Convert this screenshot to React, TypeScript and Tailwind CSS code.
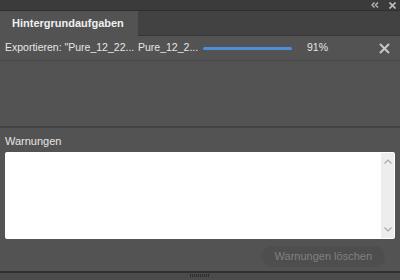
export default function App() {
  return (
    <div className="flex h-[280px] w-[400px] flex-col overflow-hidden bg-[#535353] font-['Liberation_Sans',sans-serif] text-[11px] text-[#e6e6e6]">
      {/* title strip */}
      <div className="flex h-[11px] items-center justify-end gap-[10px] border-b border-[#2e2e2e] bg-[#3b3b3b] pr-[4px]">
        <svg width="8" height="6" viewBox="0 0 8 6" className="text-[#bdbdbd]">
          <path d="M3.5 0.5 1 3l2.5 2.5M7 0.5 4.5 3 7 5.5" fill="none" stroke="currentColor" strokeWidth="1.3" />
        </svg>
        <svg width="7" height="7" viewBox="0 0 7 7" className="text-[#bdbdbd]">
          <path d="M0.5 0.5l6 6M6.5 0.5l-6 6" stroke="currentColor" strokeWidth="1.6" />
        </svg>
      </div>

      {/* tabs */}
      <div className="flex h-[25px] bg-[#424242]">
        <div className="flex w-[138px] items-center bg-[#535353] pl-[12px] font-bold text-[#f0f0f0]">
          Hintergrundaufgaben
        </div>
        <div className="flex-1 border-b border-[#363636]" />
      </div>

      {/* export row */}
      <div className="flex h-[25px] items-center whitespace-nowrap border-b border-[#464646] pl-[5px] pr-[10px] text-[10.5px]">
        <span className="w-[133px]">Exportieren: "Pure_12_22...</span>
        <span className="w-[65px]">Pure_12_2...</span>
        <div className="h-[3px] w-[89px] rounded-full bg-[#4a8fd8]" />
        <span className="ml-[15px]">91%</span>
        <svg width="11" height="11" viewBox="0 0 11 11" className="ml-auto text-[#c8c8c8]">
          <path d="M1 1l9 9M10 1l-9 9" stroke="currentColor" strokeWidth="2" />
        </svg>
      </div>

      <div className="h-[67px] border-b-2 border-[#424242]" />

      {/* warnings */}
      <div className="flex flex-1 flex-col px-[5px] pt-[7px]">
        <div className="leading-[13px]">Warnungen</div>
        <div className="mt-[4px] flex h-[87px] rounded-[2px] bg-white">
          <div className="flex-1" />
          <div className="my-[1px] mr-[1px] flex w-[13px] flex-col items-center justify-between bg-[#ededed] py-[6px]">
            <svg width="8" height="5" viewBox="0 0 8 5" className="text-[#a8a8a8]">
              <path d="M0.5 4.5 4 1l3.5 3.5" fill="none" stroke="currentColor" strokeWidth="1.2" />
            </svg>
            <svg width="8" height="5" viewBox="0 0 8 5" className="text-[#a8a8a8]">
              <path d="M0.5 0.5 4 4l3.5-3.5" fill="none" stroke="currentColor" strokeWidth="1.2" />
            </svg>
          </div>
        </div>
        <div className="mt-[7px] flex justify-end pr-[10px]">
          <button className="h-[21px] rounded-full bg-[#4e4e4e] px-[13px] text-[#808080]">
            Warnungen löschen
          </button>
        </div>
      </div>

      {/* footer */}
      <div className="flex h-[9px] items-start border-t-2 border-[#303030] bg-[#4b4b4b]">
        <div className="ml-[190px] mt-[1px] h-[3px] w-[20px] bg-[repeating-linear-gradient(90deg,#2e2e2e_0_1px,transparent_1px_2px)]" />
      </div>
    </div>
  );
}
